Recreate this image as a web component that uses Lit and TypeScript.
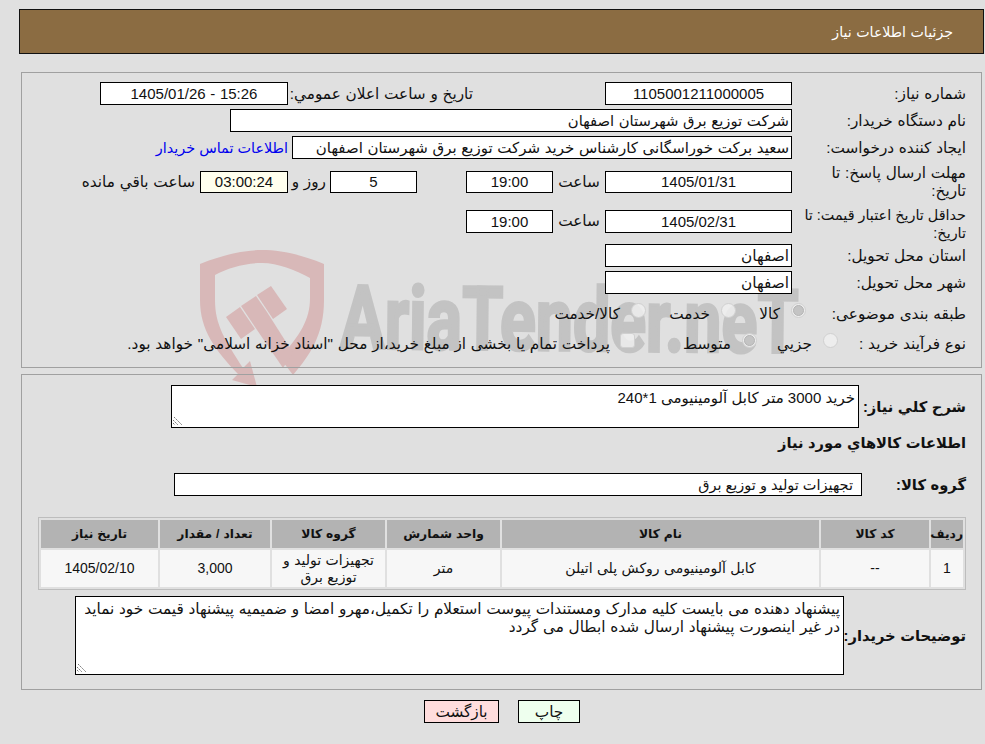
import { LitElement, html, css } from "lit";
import { customElement } from "lit/decorators.js";

@customElement("app-root")
export class AppRoot extends LitElement {
  static styles = css`
    :host {
      display: block;
      position: relative;
      width: 985px;
      height: 744px;
      overflow: hidden;
      background: #e0e0e0;
      color: #111;
      font-family: "Liberation Sans", "DejaVu Sans", sans-serif;
      font-size: 15.3px;
      word-spacing: 0.5px;
      line-height: 18px;
    }
    * { box-sizing: border-box; }
    .watermark { position: absolute; left: 0; top: 0; z-index: 0; }
    .wm-text { font-family: Roboto, sans-serif; font-weight: 700; font-size: 88px; fill: #c3c3c3; stroke: #c3c3c3; stroke-width: 3px; }
    .page { position: relative; z-index: 1; direction: rtl; padding: 9px 1px 0 19px; }
    .head {
      height: 45px; width: 965px; border: 1px solid #111; background: #8b6c42; color: #fff;
      padding-right: 30px; display: flex; align-items: center; font-size: 14.2px;
    }
    .panel { border: 1px solid #a0a0a0; margin: 0 2px; width: 961px; padding-right: 15px; }
    .p1 { margin-top: 18px; height: 296px; padding-top: 9px; }
    .p2 { margin-top: 6px; height: 316px; padding-top: 10px; }
    .row { display: flex; align-items: center; }
    .r1 { height: 23px; margin-bottom: 4px; }
    .r2 { height: 23px; margin-bottom: 5px; }
    .r4 { height: 36px; margin-bottom: 6px; }
    .r5 { height: 36px; margin-bottom: 2px; align-items: flex-start; }
    .r5 .box { margin-top: 4px; }
    .r5 .lbl2 { margin-top: 6px; }
    .r8 { height: 20px; margin: 0 0 10px; }
    .first { margin-top: 10px; }
    .lab { width: 174px; flex: none; white-space: nowrap; }
    .lab-r { width: 160px; flex: none; }
    .lab-p { width: 128px; flex: none; }
    .tight { font-size: 14.4px; word-spacing: 0; }
    .box {
      height: 23px; flex: none; border: 1px solid #000; background: #fff; padding: 0 2px;
      display: flex; align-items: center; white-space: nowrap; overflow: hidden;
    }
    .num { justify-content: center; font-size: 15px; }
    .ltr { direction: ltr; }
    .short { height: 22px; }
    .r-main { width: 187px; }
    .r-wide { width: 562px; font-size: 14.8px; }
    .r-mid { width: 500px; font-size: 15px; }
    .r-pub { width: 188px; }
    .r-time { width: 87px; }
    .r-left { width: 88px; background: #ffffee; }
    .ml-pub { margin-right: 132px; margin-left: 5px; flex: none; width: 180px; white-space: nowrap; }
    .link { color: #0000ee; margin-right: 4px; white-space: nowrap; font-size: 14.4px; word-spacing: 0; }
    .lbl2 { width: 52px; flex: none; text-align: center; }
    .days { margin-right: 49px; }
    .ruz { margin: 0 4px 0 6px; white-space: nowrap; width: 32px; text-align: center; flex: none; }
    .rem { margin-right: 5px; white-space: nowrap; }
    .opt { display: flex; align-items: center; flex: none; }
    .o70 { width: 70px; } .o90 { width: 90px; } .o81 { width: 81px; } .o122 { width: 122px; }
    .dot {
      width: 15px; height: 15px; flex: none; border-radius: 50%; margin-left: 11px; margin-top: -7px;
      background: rgba(238,238,238,.85); border: 1px solid #d0d0d0; display: flex; align-items: center; justify-content: center;
    }
    .dot.on::after { content: ""; width: 9px; height: 9px; border-radius: 50%; background: #c4c4c4; border: 1px solid #b4b4b4; }
    .chk { border-radius: 3px; margin-left: 10px; }
    .sect { font-weight: 700; font-size: 14.7px; white-space: nowrap; }
    .taw { position: relative; flex: none; }
    .ta {
      display: block; border: 1px solid #000; background: #fff; color: #111; direction: rtl; resize: none;
      font: inherit; word-spacing: inherit; padding: 3px; margin: 0; outline: none; overflow: hidden;
    }
    .ta1 { width: 688px; height: 43px; font-size: 15px; word-spacing: 0; }
    .ta2 { width: 769px; height: 79px; }
    .grip { position: absolute; left: 2px; bottom: 2px; display: block; }
    .l-a { width: 107px; flex: none; }
    .l-b { width: 104px; flex: none; }
    .l-c { width: 122px; flex: none; }
    .gr-title { height: 18px; margin: 6px 0 21px; }
    .r-group { width: 688px; padding-right: 8px; font-size: 14.5px; word-spacing: 0; }
    table {
      width: 928px; margin: 21px 0 6px; table-layout: fixed; border-collapse: separate; border-spacing: 2px;
      border: 1px solid #bdbdbd; direction: rtl; font-size: 14px;
    }
    th { height: 28px; background: #b3b3b3; font-weight: 700; font-size: 12.3px; padding: 0; text-align: center; }
    td { height: 37px; background: #f7f7f7; text-align: center; padding: 0 8px; line-height: 17px; }
    .btns { display: flex; padding-right: 404px; margin-top: 10px; }
    .btn { height: 23px; border: 1px solid #000; display: flex; align-items: center; justify-content: center; flex: none; }
    .print { width: 62px; background: #eeffee; margin-left: 19px; }
    .back { width: 75px; background: #ffdddd; }
  `;

  grip() {
    return html`<svg class="grip" width="10" height="9" viewBox="0 0 10 9" fill="none" stroke="#777" stroke-width="1" stroke-dasharray="2 1">
      <path d="M1 0L9 8" /><path d="M0 3L5 8" /><path d="M0 6L2 8" />
    </svg>`;
  }

  render() {
    return html`
      <svg class="watermark" width="985" height="744" viewBox="0 0 985 744">
        <g fill="#d8b8b8">
          <path d="M200 264C225 254 245 250 262 250C280 250 300 254 324 264L324 300C324 335 310 355 293 375L280 358C300 335 310 320 310 298L310 278C295 270 278 263 262 263C245 263 228 268 215 275L215 300C215 325 225 340 243 368L250 361L257 387L232 380L238 374C215 350 200 330 200 300Z" />
          <path d="M226 317L240 307L255 329L241 339Z" />
          <path d="M241 306L256 296L267 312L293 353L283 368L255 327Z" />
          <path d="M257 295L271 286L287 309L273 319Z" />
        </g>
        <text class="wm-text" x="340" y="348" textLength="458" lengthAdjust="spacingAndGlyphs" transform="rotate(0.6 340 348)">AriaTender.neT</text>
      </svg>
      <div class="page">
        <div class="head">جزئیات اطلاعات نیاز</div>

        <div class="panel p1">
          <div class="row r1">
            <span class="lab">شماره نیاز:</span>
            <div class="box num r-main">1105001211000005</div>
            <span class="ml-pub">تاریخ و ساعت اعلان عمومي:</span>
            <div class="box num ltr r-pub">1405/01/26 - 15:26</div>
          </div>
          <div class="row r1">
            <span class="lab">نام دستگاه خریدار:</span>
            <div class="box r-wide">شرکت توزیع برق شهرستان اصفهان</div>
          </div>
          <div class="row r2">
            <span class="lab">ایجاد کننده درخواست:</span>
            <div class="box r-mid">سعید برکت خوراسگانی کارشناس خرید شرکت توزیع برق شهرستان اصفهان</div>
            <a class="link">اطلاعات تماس خریدار</a>
          </div>
          <div class="row r4">
            <span class="lab">مهلت ارسال پاسخ: تا<br />تاریخ:</span>
            <div class="box num short r-main">1405/01/31</div>
            <span class="lbl2">ساعت</span>
            <div class="box num short r-time">19:00</div>
            <div class="box num short r-time days">5</div>
            <span class="ruz">روز و</span>
            <div class="box num short r-left">03:00:24</div>
            <span class="rem">ساعت باقي مانده</span>
          </div>
          <div class="row r5">
            <span class="lab tight">حداقل تاریخ اعتبار قیمت: تا<br />تاریخ:</span>
            <div class="box num r-main">1405/02/31</div>
            <span class="lbl2">ساعت</span>
            <div class="box num r-time">19:00</div>
          </div>
          <div class="row r1">
            <span class="lab">استان محل تحویل:</span>
            <div class="box r-main">اصفهان</div>
          </div>
          <div class="row r1">
            <span class="lab">شهر محل تحویل:</span>
            <div class="box r-main">اصفهان</div>
          </div>
          <div class="row r8 first">
            <span class="lab-r">طبقه بندی موضوعی:</span>
            <div class="opt o70"><span class="dot on"></span>کالا</div>
            <div class="opt o90"><span class="dot"></span>خدمت</div>
            <div class="opt"><span class="dot"></span>کالا/خدمت</div>
          </div>
          <div class="row r8">
            <span class="lab-p">نوع فرآیند خرید :</span>
            <div class="opt o81"><span class="dot"></span>جزیي</div>
            <div class="opt o122"><span class="dot on"></span>متوسط</div>
            <div class="opt"><span class="dot chk"></span>پرداخت تمام یا بخشی از مبلغ خرید،از محل "اسناد خزانه اسلامی" خواهد بود.</div>
          </div>
        </div>

        <div class="panel p2">
          <div class="row">
            <span class="sect l-a">شرح کلي نياز:</span>
            <div class="taw">
              <textarea class="ta ta1" readonly>خرید 3000 متر کابل آلومینیومی 1*240</textarea>
              ${this.grip()}
            </div>
          </div>
          <div class="row gr-title"><span class="sect">اطلاعات کالاهاي مورد نياز</span></div>
          <div class="row">
            <span class="sect l-b">گروه کالا:</span>
            <div class="box r-group">تجهیزات تولید و توزیع برق</div>
          </div>
          <table>
            <colgroup>
              <col style="width:32px" /><col style="width:108px" /><col style="width:317px" /><col style="width:113px" />
              <col style="width:113px" /><col style="width:110px" /><col style="width:117px" />
            </colgroup>
            <tr>
              <th>ردیف</th><th>کد کالا</th><th>نام کالا</th><th>واحد شمارش</th><th>گروه کالا</th><th>تعداد / مقدار</th><th>تاریخ نیاز</th>
            </tr>
            <tr>
              <td>1</td><td>--</td><td>کابل آلومینیومی روکش پلی اتیلن</td><td>متر</td><td>تجهیزات تولید و توزیع برق</td><td>3,000</td><td>1405/02/10</td>
            </tr>
          </table>
          <div class="row">
            <span class="sect l-c">توضیحات خریدار:</span>
            <div class="taw">
              <textarea class="ta ta2" readonly>پیشنهاد دهنده می بایست کلیه مدارک ومستندات پیوست استعلام را تکمیل،مهرو امضا و ضمیمیه پیشنهاد قیمت خود نماید
در غیر اینصورت پیشنهاد ارسال شده ابطال می گردد</textarea>
              ${this.grip()}
            </div>
          </div>
        </div>

        <div class="btns">
          <div class="btn print">چاپ</div>
          <div class="btn back">بازگشت</div>
        </div>
      </div>
    `;
  }
}
